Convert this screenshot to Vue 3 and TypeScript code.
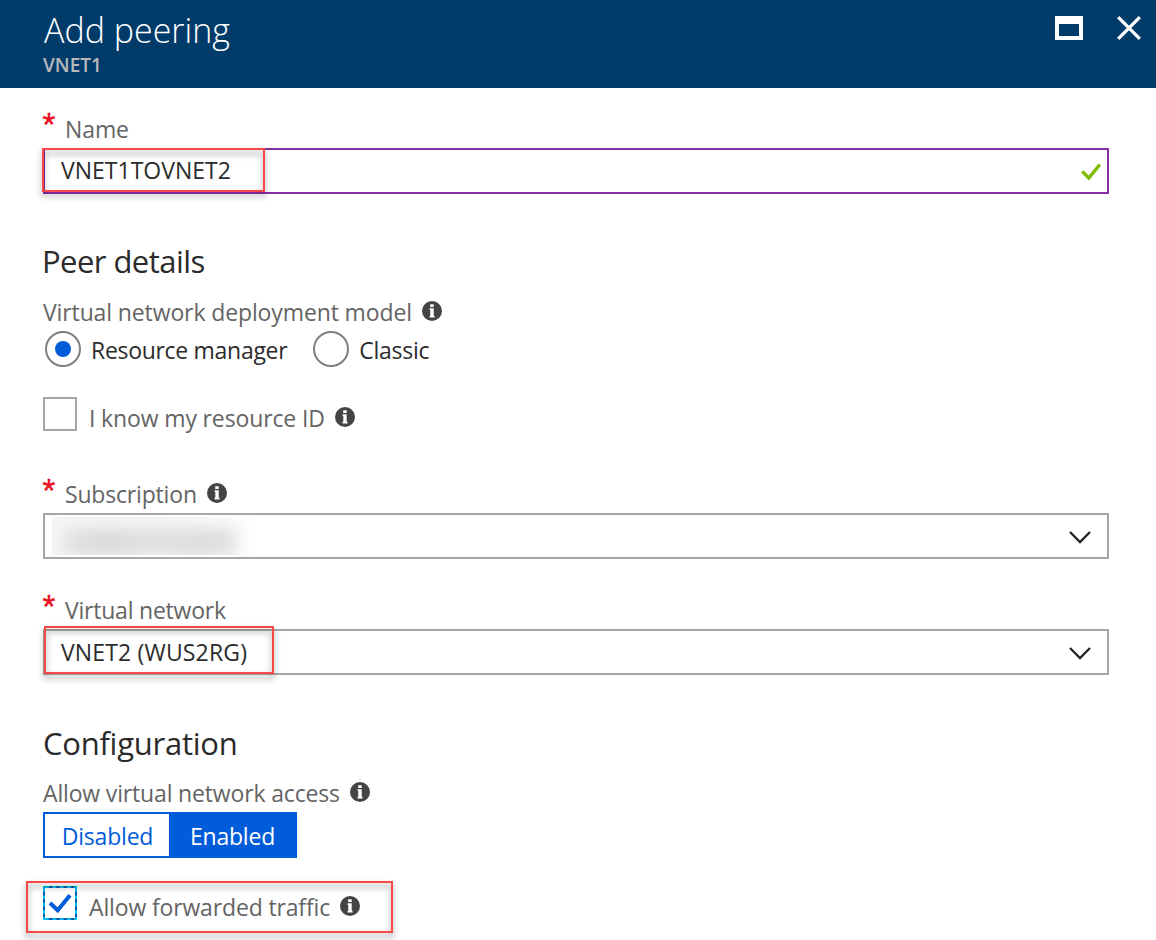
<script setup lang="ts">
import { h, ref } from 'vue'

const name = ref('VNET1TOVNET2')
const deploymentModel = ref<'arm' | 'classic'>('arm')
const knowResourceId = ref(false)
const access = ref<'disabled' | 'enabled'>('enabled')
const allowForwarded = ref(true)

const InfoIcon = () =>
  h('svg', { width: 20, height: 20, viewBox: '0 0 20 20', 'aria-hidden': 'true' }, [
    h('circle', { cx: 10, cy: 10, r: 10, fill: '#444' }),
    h('path', { d: 'M8.2 3.2h3.5v2.7H8.2zM7.6 7.2h4.1v7.6h0.8v1.7H7.6v-1.7h0.7V8.9H7.6z', fill: '#fff' }),
  ])

const ChevronIcon = () =>
  h('svg', { width: 22, height: 13, viewBox: '0 0 22 13', 'aria-hidden': 'true' }, [
    h('path', { d: 'M1 1L11 11L21 1', fill: 'none', stroke: '#222', 'stroke-width': 2.3 }),
  ])
</script>

<template>
  <main class="blade">
    <header class="header">
      <div class="titles">
        <h1 class="title">Add peering</h1>
        <div class="subtitle">VNET1</div>
      </div>
      <div class="window-actions">
        <svg class="maximize" width="28" height="24" viewBox="0 0 28 24">
          <path d="M0 0H28V24H0ZM4 8V20H24V8Z" fill="#fff" fill-rule="evenodd" />
        </svg>
        <svg class="close" width="24" height="24" viewBox="0 0 24 24">
          <path d="M1.2 1.2L22.8 22.8M22.8 1.2L1.2 22.8" stroke="#fff" stroke-width="3.3" />
        </svg>
      </div>
    </header>

    <section class="form">
      <div class="label-row name-row">
        <span class="star">*</span>
        <span class="label t-name">Name</span>
      </div>
      <div class="box valid">
        <span class="value t-value">{{ name }}</span>
        <svg class="tick" width="20" height="18" viewBox="0 0 20 18">
          <path d="M1.2 8.4L7.8 15L18.8 1.5" fill="none" stroke="#7fba00" stroke-width="3.4" />
        </svg>
        <div class="callout callout-name"></div>
      </div>

      <h2 class="heading peer">Peer details</h2>
      <div class="label-row model-row">
        <span class="label t-model">Virtual network deployment model</span>
        <InfoIcon class="info" />
      </div>
      <div class="radios">
        <label class="radio" @click="deploymentModel = 'arm'">
          <span class="ring"><span v-if="deploymentModel === 'arm'" class="dot"></span></span>
          <span class="choice t-arm">Resource manager</span>
        </label>
        <label class="radio second" @click="deploymentModel = 'classic'">
          <span class="ring"><span v-if="deploymentModel === 'classic'" class="dot"></span></span>
          <span class="choice t-classic">Classic</span>
        </label>
      </div>

      <div class="check-row know-row">
        <span class="check" @click="knowResourceId = !knowResourceId"></span>
        <span class="label t-know">I know my resource ID</span>
        <InfoIcon class="info" />
      </div>

      <div class="label-row sub-row">
        <span class="star">*</span>
        <span class="label t-sub">Subscription</span>
        <InfoIcon class="info" />
      </div>
      <div class="box">
        <span class="redacted"><span class="smudge"></span></span>
        <ChevronIcon class="chevron" />
      </div>

      <div class="label-row vnet-row">
        <span class="star">*</span>
        <span class="label t-vnet">Virtual network</span>
      </div>
      <div class="box">
        <span class="value t-peer">VNET2 (WUS2RG)</span>
        <ChevronIcon class="chevron" />
        <div class="callout callout-vnet"></div>
      </div>

      <h2 class="heading config">Configuration</h2>
      <div class="label-row access-row">
        <span class="label t-access">Allow virtual network access</span>
        <InfoIcon class="info" />
      </div>
      <div class="toggle">
        <span class="option off" :class="{ on: access === 'disabled' }" @click="access = 'disabled'">Disabled</span>
        <span class="option" :class="{ on: access === 'enabled' }" @click="access = 'enabled'">Enabled</span>
      </div>

      <div class="check-row forward-row">
        <svg class="check-focus" width="34" height="34" viewBox="0 0 34 34" @click="allowForwarded = !allowForwarded">
          <rect x="1" y="1" width="32" height="32" fill="#fff" stroke="#00bcf2" stroke-width="2" />
          <path
            d="M6 1H31M6 33H31M1 6V31M33 6V31"
            fill="none"
            stroke="#0f5aa8"
            stroke-width="2"
            stroke-dasharray="3.4 3.9"
          />
          <path v-if="allowForwarded" d="M7 17L14.7 24.3L27 9.3" fill="none" stroke="#015cda" stroke-width="4" />
        </svg>
        <span class="label t-forward">Allow forwarded traffic</span>
        <InfoIcon class="info" />
        <div class="callout callout-forward"></div>
      </div>
    </section>
  </main>
</template>

<style>
body {
  background: #fff;
  overflow: hidden;
}
</style>

<style scoped>
.blade {
  width: 100%;
  height: 940px;
  overflow: hidden;
  background: #fff;
  font-family: 'Open Sans', 'Noto Sans', sans-serif;
  font-size: 23px;
  line-height: 30px;
  color: #2b2b2b;
  white-space: nowrap;
}
.header {
  box-sizing: border-box;
  height: 88px;
  padding: 8px 15px 0 43px;
  display: flex;
  justify-content: space-between;
  background: #003b6a;
}
.title {
  margin: 0 0 0 1px;
  padding-top: 1px;
  font-size: 34px;
  line-height: 43px;
  font-weight: 300;
  color: #fff;
}
.subtitle {
  font-size: 19px;
  line-height: 26px;
  font-weight: 600;
  color: #b6b8ba;
}
.window-actions {
  display: flex;
  gap: 34px;
  padding-top: 8px;
}
.form {
  padding: 25px 47px 0 43px;
}
.label-row,
.check-row {
  display: flex;
  align-items: flex-start;
  height: 30px;
}
.label {
  color: #646464;
}
.name-row .label {
  padding-top: 1px;
}
.star {
  width: 22px;
  margin-top: -5px;
  font-family: 'Liberation Sans', sans-serif;
  font-size: 33px;
  line-height: 33px;
  text-indent: -0.5px;
  color: #e81123;
  -webkit-text-stroke: 0.4px #e81123;
}
.info {
  margin: 4px 0 0 10px;
  flex: none;
}
.box {
  position: relative;
  box-sizing: border-box;
  height: 46px;
  margin-top: 4px;
  padding: 0 16px;
  border: 2px solid #a6a6a6;
  display: flex;
  align-items: center;
}
.box.valid {
  margin-top: 5px;
  border-color: #882da3;
  padding-right: 6px;
}
.t-value {
  margin-bottom: 2px;
}
.tick,
.chevron {
  margin-left: auto;
  margin-top: 2px;
}
.heading {
  margin: 0;
  padding-top: 2px;
  font-size: 31px;
  line-height: 38px;
  font-weight: 400;
}
.peer {
  margin: 46px 0 0 -1px;
  letter-spacing: -0.55px;
}
.config {
  margin-top: 47px;
  letter-spacing: -0.25px;
}
.model-row {
  margin-top: 17px;
}
.radios {
  display: flex;
  height: 36px;
  margin: 4px 0 0 2px;
}
.radio {
  display: flex;
  align-items: center;
}
.ring {
  box-sizing: border-box;
  width: 36px;
  height: 36px;
  border: 2px solid #7f7f7f;
  border-radius: 50%;
  display: flex;
  align-items: center;
  justify-content: center;
}
.dot {
  width: 16px;
  height: 16px;
  border-radius: 50%;
  background: #015cda;
}
.choice {
  margin: 2px 0 0 10px;
}
.second {
  margin-left: 26px;
}
.know-row {
  height: 34px;
  margin-top: 30px;
}
.check {
  box-sizing: border-box;
  width: 34px;
  height: 34px;
  border: 2px solid #a6a6a6;
}
.check-row .label {
  margin: 6px 0 0 12px;
}
.check-row .info {
  margin-top: 10px;
}
.sub-row {
  margin-top: 48px;
}
.redacted {
  width: 206px;
  height: 38px;
  margin: 0 0 0 -9px;
  overflow: hidden;
  display: flex;
  align-items: flex-end;
  background: linear-gradient(90deg, #f6f6f6, #f8f8f8 70%, #fff);
}
.smudge {
  width: 172px;
  height: 28px;
  margin: 0 0 -1px 12px;
  background: linear-gradient(90deg, #e2e2e2, #d9d9d9 25%, #e0e0e0 50%, #dcdcdc 85%, #e0e0e0);
  filter: blur(8px);
}
.vnet-row {
  margin-top: 36px;
}
.access-row {
  margin-top: 16px;
}
.toggle {
  box-sizing: border-box;
  width: 254px;
  height: 46px;
  margin-top: 4px;
  border: 2px solid #015cda;
  display: flex;
}
.option {
  flex: 1;
  display: flex;
  align-items: center;
  justify-content: center;
  padding: 2px 0 0 1px;
  color: #015cda;
  letter-spacing: -0.2px;
}
.option.off {
  flex: 0 0 123px;
}
.option.on {
  background: #015cda;
  color: #fff;
}
.forward-row {
  position: relative;
  height: 34px;
  margin-top: 28px;
}
.callout {
  position: absolute;
  box-sizing: border-box;
  border: 2px solid #f94848;
  filter: drop-shadow(0 4px 3px rgba(0, 0, 0, 0.45));
  pointer-events: none;
}
.callout-name {
  left: -3px;
  top: -2px;
  width: 223px;
  height: 44px;
}
.callout-vnet {
  left: -1px;
  top: -5px;
  width: 230px;
  height: 48px;
}
.callout-forward {
  left: -17px;
  top: -5px;
  width: 367px;
  height: 52px;
}
.t-name { letter-spacing: -0.1px; }
.t-model { letter-spacing: -0.12px; }
.t-arm { letter-spacing: -0.3px; }
.t-classic { letter-spacing: -0.25px; }
.t-know { letter-spacing: -0.14px; }
.t-sub { letter-spacing: -0.18px; }
.t-vnet { letter-spacing: -0.22px; }
.t-peer { letter-spacing: 0.16px; }
.t-access { letter-spacing: -0.16px; }
.t-forward { letter-spacing: -0.15px; }
</style>
